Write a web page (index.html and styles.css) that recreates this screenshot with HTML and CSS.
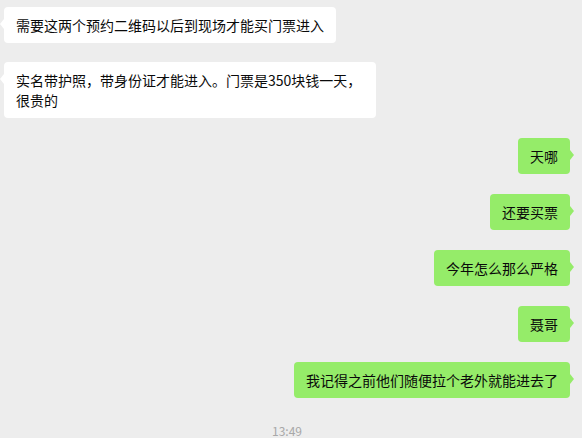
FILE: index.html
```html
<!DOCTYPE html>
<html lang="zh-CN">
<head>
<meta charset="utf-8">
<title>Chat</title>
<link rel="stylesheet" href="styles.css">
</head>
<body>
<div class="chat">
  <div class="row left first"><div class="bubble white">需要这两个预约二维码以后到现场才能买门票进入</div></div>
  <div class="row left"><div class="bubble white wide">实名带护照，带身份证才能进入。门票是350块钱一天，很贵的</div></div>
  <div class="row right"><div class="bubble green">天哪</div></div>
  <div class="row right"><div class="bubble green">还要买票</div></div>
  <div class="row right"><div class="bubble green">今年怎么那么严格</div></div>
  <div class="row right"><div class="bubble green">聂哥</div></div>
  <div class="row right"><div class="bubble green">我记得之前他们随便拉个老外就能进去了</div></div>
  <div class="time">13:49</div>
</div>
</body>
</html>
```
FILE: styles.css
```css
html, body {
  margin: 0;
  padding: 0;
  background: #ededed;
  width: 582px;
  height: 438px;
  overflow: hidden;
}
body {
  font-family: "Noto Sans CJK SC", "Microsoft YaHei", sans-serif;
  font-size: 14px;
  color: #0a0a0a;
}
.chat {
  display: flex;
  flex-direction: column;
  padding: 7px 12px 0 4px;
}
.row {
  display: flex;
  margin-top: 19px;
}
.row.first { margin-top: 0; }
.row.right { justify-content: flex-end; margin-top: 20px; }
.bubble {
  position: relative;
  padding: 8px 12px;
  line-height: 20px;
  border-radius: 4px;
  box-sizing: border-box;
}
.bubble.white { background: #fff; max-width: 372px; }
.bubble.green { background: #95ec69; }
.bubble.white::before {
  content: "";
  position: absolute;
  left: -4px;
  top: 12px;
  border-top: 5px solid transparent;
  border-bottom: 5px solid transparent;
  border-right: 4px solid #fff;
}
.bubble.green::after {
  content: "";
  position: absolute;
  right: -4px;
  top: 12px;
  border-top: 5px solid transparent;
  border-bottom: 5px solid transparent;
  border-left: 4px solid #95ec69;
}
.time {
  margin-top: 25px;
  text-align: center;
  font-size: 12px;
  color: #a8a8a8;
  line-height: 16px;
}
```
